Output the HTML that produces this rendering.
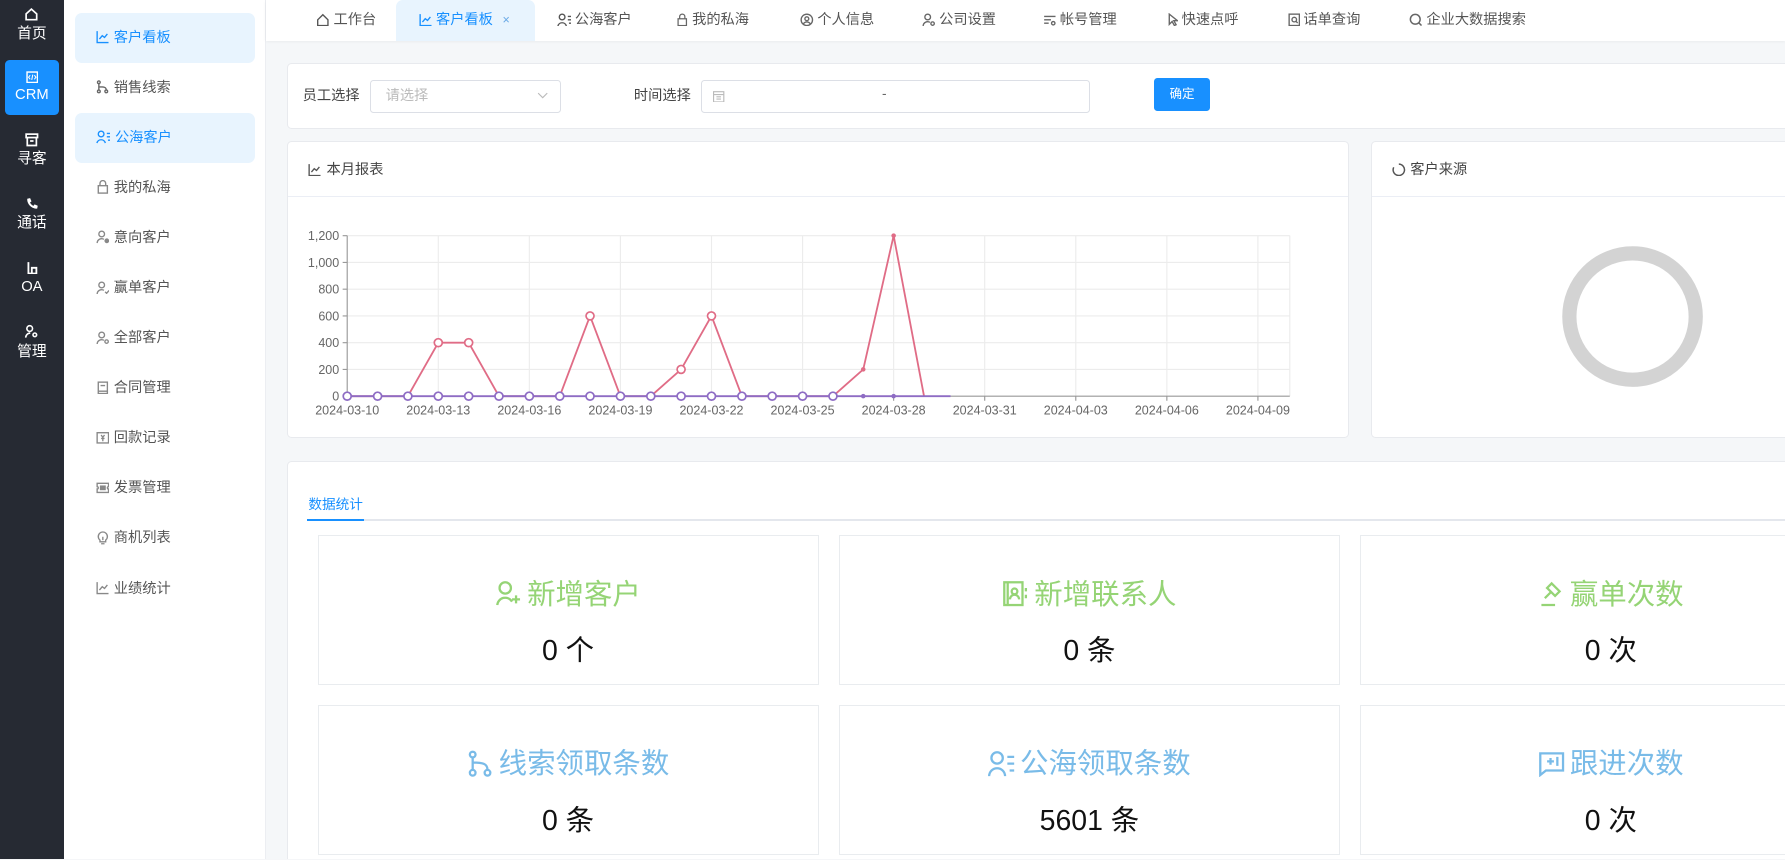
<!DOCTYPE html>
<html><head><meta charset="utf-8"><style>
*{box-sizing:border-box;margin:0;padding:0}
html,body{width:1785px;height:860px;overflow:hidden;background:#f5f6f8}
body{font-family:"Liberation Sans","Noto Sans CJK SC",sans-serif;}
#w{zoom:1.13839;width:1568px;height:755px;position:relative;overflow:hidden;background:#f5f7f9}
.abs{position:absolute}
#dark{left:0;top:0;width:56px;height:755px;background:#262a33;color:#fff}
.di{position:absolute;left:4px;width:48px;text-align:center;font-size:13px;line-height:16px}
.di svg{display:block;margin:0 auto 3px}
#sub{left:56px;top:0;width:178px;height:755px;background:#fff;border-right:1px solid #eceef2}
.si{position:absolute;left:10px;width:158px;height:44px;border-radius:6px;font-size:12.5px;color:#555;line-height:44px;padding-left:18px}
.si svg{vertical-align:-2px;margin-right:4px}
.si.on{background:#e8f4fe;color:#1890ff}
#tabs{left:234px;top:0;width:1334px;height:36px;background:#fff;box-shadow:0 1px 3px rgba(0,0,0,.06)}
.tb{position:absolute;top:0;height:36px;line-height:36px;font-size:12.5px;color:#555}
.tb svg{vertical-align:-2px;margin-right:3px}
.card{position:absolute;background:#fff;border:1px solid #e8eaee;border-radius:4px}
.box{position:absolute;background:#fff;border:1px solid #e9ecef;text-align:center}
.bt{font-size:25px;margin-top:35px;height:34px;line-height:34px}
.bt svg{vertical-align:-3px;margin-right:4px}
.bv{font-size:25px;color:#111;margin-top:12px}
.g{color:#95d475}.b{color:#79bbe8}
</style></head><body><div id="w">
<div id="dark" class="abs">
 <div class="di" style="top:6px"><svg width="13" height="13" viewBox="0 0 14 14" fill="none" stroke="#fff" stroke-width="1.6"><path d="M2 6.5L7 2l5 4.5V12H2z"/></svg>首页</div>
 <div class="di" style="top:53px;height:48px;background:#1890ff;border-radius:4px;padding-top:9px"><svg width="11" height="11" viewBox="0 0 12 12"><rect x="1" y="1" width="10" height="10" fill="none" stroke="#fff" stroke-width="1.4"/><path d="M4 4l-1.5 2L4 8M8 4l1.5 2L8 8M6.5 3.5l-1 5" stroke="#fff" fill="none"/></svg>CRM</div>
 <div class="di" style="top:117px"><svg width="12" height="12" viewBox="0 0 12 12" fill="none" stroke="#fff" stroke-width="1.5"><rect x="1" y="1" width="10" height="3"/><path d="M2 4v7h8V4M4.5 7h3"/></svg>寻客</div>
 <div class="di" style="top:173px"><svg width="12" height="12" viewBox="0 0 12 12"><path d="M2 1.5l2.5-.5 1.2 2.8-1.3 1a6 6 0 003 3l1-1.3 2.8 1.2-.5 2.5C6 10.5 1.5 6 2 1.5z" fill="#fff"/></svg>通话</div>
 <div class="di" style="top:229px"><svg width="12" height="12" viewBox="0 0 12 12" fill="none" stroke="#fff" stroke-width="1.6"><path d="M3 1v10h7V6H6v5"/></svg>OA</div>
 <div class="di" style="top:285px"><svg width="13" height="13" viewBox="0 0 13 13" fill="none" stroke="#fff" stroke-width="1.4"><circle cx="5" cy="4" r="2.5"/><path d="M1.5 12a4 4 0 014-4"/><circle cx="9.5" cy="9.5" r="1.6"/></svg>管理</div>
</div>
<div id="sub" class="abs">
 <div class="si on" style="top:11px"><svg width="12" height="12" viewBox="0 0 12 12" fill="none" stroke="#1890ff" stroke-width="1.2"><path d="M1 1v10h10M3 8l2.5-3 2 1.5L10 3.5"/></svg>客户看板</div>
 <div class="si" style="top:55px"><svg width="12" height="12" viewBox="0 0 12 12" fill="none" stroke="#666" stroke-width="1.2"><circle cx="2.5" cy="2" r="1.2"/><circle cx="2.5" cy="10" r="1.2"/><circle cx="9" cy="10" r="1.2"/><path d="M2.5 3.2v5.6M2.5 6c4 0 6.5 0 6.5 2.8"/></svg>销售线索</div>
 <div class="si on" style="top:99px"><svg width="13" height="12" viewBox="0 0 13 12" fill="none" stroke="#1890ff" stroke-width="1.2"><circle cx="4.5" cy="3.5" r="2.5"/><path d="M.8 11.5a3.8 3.8 0 017.4 0M9.5 3h3M9.5 6h3M10.5 9h2"/></svg>公海客户</div>
 <div class="si" style="top:143px"><svg width="12" height="12" viewBox="0 0 12 12" fill="none" stroke="#888" stroke-width="1.2"><rect x="2" y="5" width="8" height="6.5"/><path d="M3.5 5V3a2.5 2.5 0 015 0v2"/></svg>我的私海</div>
 <div class="si" style="top:187px"><svg width="12" height="12" viewBox="0 0 12 12" fill="none" stroke="#888" stroke-width="1.2"><circle cx="5" cy="3.5" r="2.5"/><path d="M1 11.5a4 4 0 016-3.3"/><circle cx="9.5" cy="9.5" r="1.5" fill="#888"/></svg>意向客户</div>
 <div class="si" style="top:231px"><svg width="12" height="12" viewBox="0 0 12 12" fill="none" stroke="#888" stroke-width="1.2"><circle cx="5" cy="3.5" r="2.5"/><path d="M1 11.5a4 4 0 016-3.3M8 9.5l1.3 1.3 2.2-2.5"/></svg>赢单客户</div>
 <div class="si" style="top:275px"><svg width="12" height="12" viewBox="0 0 12 12" fill="none" stroke="#888" stroke-width="1.2"><circle cx="5" cy="3.5" r="2.5"/><path d="M1 11.5a4 4 0 016-3.3"/><circle cx="9.3" cy="9.3" r="1.5"/></svg>全部客户</div>
 <div class="si" style="top:319px"><svg width="12" height="12" viewBox="0 0 12 12" fill="none" stroke="#888" stroke-width="1.2"><rect x="2" y="1" width="8" height="10"/><path d="M4 4h4M2 9h8"/></svg>合同管理</div>
 <div class="si" style="top:363px"><svg width="12" height="12" viewBox="0 0 12 12" fill="none" stroke="#888" stroke-width="1.2"><rect x="1" y="1.5" width="10" height="9"/><path d="M4.5 3.5L6 5.5l1.5-2M6 5.5V9M4.5 6.5h3"/></svg>回款记录</div>
 <div class="si" style="top:407px"><svg width="12" height="12" viewBox="0 0 12 12" fill="none" stroke="#888" stroke-width="1.2"><path d="M1 2h10v3a1 1 0 000 2v3H1V7a1 1 0 000-2z"/><rect x="4" y="4.5" width="4" height="3" fill="#888"/></svg>发票管理</div>
 <div class="si" style="top:451px"><svg width="12" height="12" viewBox="0 0 12 12" fill="none" stroke="#888" stroke-width="1.2"><path d="M3.5 8A4 4 0 118.5 8v1.5h-5zM4.5 11.2h3M6 5v3"/></svg>商机列表</div>
 <div class="si" style="top:495px"><svg width="12" height="12" viewBox="0 0 12 12" fill="none" stroke="#888" stroke-width="1.2"><path d="M1 1v10h10M3 8l2.5-3 2 1.5L10 3.5"/></svg>业绩统计</div>
</div>
<div id="tabs" class="abs">
 <div class="tb" style="left:44px"><svg width="12" height="12" viewBox="0 0 12 12" fill="none" stroke="#555" stroke-width="1.2"><path d="M1.5 6L6 1.5 10.5 6v5h-9z"/></svg>工作台</div>
 <div class="tb" style="left:114px;width:122px;background:#e8f4fe;border-radius:6px 6px 0 0;padding-left:20px;color:#1890ff"><svg width="12" height="12" viewBox="0 0 12 12" fill="none" stroke="#1890ff" stroke-width="1.2"><path d="M1 1v10h10M3 8l2.5-3 2 1.5L10 3.5"/></svg>客户看板 <span style="font-size:11px;margin-left:5px;color:#6aa9e6">×</span></div>
 <div class="tb" style="left:255px"><svg width="13" height="12" viewBox="0 0 13 12" fill="none" stroke="#555" stroke-width="1.2"><circle cx="4.5" cy="3.5" r="2.5"/><path d="M.8 11.5a3.8 3.8 0 017.4 0M9.5 3h3M9.5 6h3M10.5 9h2"/></svg>公海客户</div>
 <div class="tb" style="left:360px"><svg width="11" height="12" viewBox="0 0 12 12" fill="none" stroke="#666" stroke-width="1.2"><rect x="2" y="5" width="8" height="6.5"/><path d="M3.5 5V3a2.5 2.5 0 015 0v2"/></svg>我的私海</div>
 <div class="tb" style="left:469px"><svg width="12" height="12" viewBox="0 0 12 12" fill="none" stroke="#666" stroke-width="1.2"><circle cx="6" cy="6" r="5"/><circle cx="6" cy="5" r="1.7"/><path d="M3 9.5a3.5 3.5 0 016 0"/></svg>个人信息</div>
 <div class="tb" style="left:576px"><svg width="12" height="12" viewBox="0 0 12 12" fill="none" stroke="#666" stroke-width="1.2"><circle cx="5" cy="3.5" r="2.5"/><path d="M1 11.5a4 4 0 016-3.3"/><circle cx="9.3" cy="9.3" r="1.5"/></svg>公司设置</div>
 <div class="tb" style="left:682px"><svg width="12" height="12" viewBox="0 0 12 12" fill="none" stroke="#666" stroke-width="1.2"><path d="M1 3h10M1 6h6M1 9h4"/><circle cx="9" cy="9" r="1.5"/></svg>帐号管理</div>
 <div class="tb" style="left:791px"><svg width="10" height="12" viewBox="0 0 10 12" fill="none" stroke="#666" stroke-width="1.2"><path d="M2 1v9l2.5-2.5L6.5 11 8 10.3 6 6.8h3.2z"/></svg>快速点呼</div>
 <div class="tb" style="left:897px"><svg width="11" height="12" viewBox="0 0 11 12" fill="none" stroke="#666" stroke-width="1.2"><rect x="1" y="1" width="9" height="10"/><circle cx="5.5" cy="5.8" r="2"/><path d="M7 7.3l1.5 1.5"/></svg>话单查询</div>
 <div class="tb" style="left:1004px"><svg width="12" height="12" viewBox="0 0 12 12" fill="none" stroke="#666" stroke-width="1.3"><circle cx="5.5" cy="5.5" r="4.3"/><path d="M8.5 8.5L11 11"/></svg>企业大数据搜索</div>
</div>
<div class="card" style="left:252px;top:55px;width:1330px;height:58px">
 <div class="abs" style="left:13px;top:19px;font-size:12.5px;color:#444">员工选择</div>
 <div class="abs" style="left:72px;top:14px;width:168px;height:29px;border:1px solid #dcdfe6;border-radius:3px;font-size:12.5px;color:#bbb;line-height:27px;padding-left:13px">请选择<svg class="abs" style="right:10px;top:10px" width="10" height="6" viewBox="0 0 10 6" fill="none" stroke="#bbb"><path d="M1 1l4 4 4-4"/></svg></div>
 <div class="abs" style="left:304px;top:19px;font-size:12.5px;color:#444">时间选择</div>
 <div class="abs" style="left:363px;top:14px;width:342px;height:29px;border:1px solid #dcdfe6;border-radius:3px">
  <svg class="abs" style="left:10px;top:8px" width="10" height="11" viewBox="0 0 10 11" fill="none" stroke="#bbb"><rect x=".5" y="1.5" width="9" height="9"/><path d="M.5 4h9M3 6h4M3 8h4"/></svg>
  <span class="abs" style="left:158px;top:5px;font-size:12px;color:#666">-</span></div>
 <div class="abs" style="left:761px;top:13px;width:49px;height:29px;background:#1890ff;border-radius:3px;color:#fff;font-size:11px;text-align:center;line-height:29px">确定</div>
</div>
<div class="card" style="left:252px;top:124px;width:933px;height:261px">
 <div class="abs" style="left:18px;top:15px;font-size:12.5px;color:#444"><svg width="12" height="12" viewBox="0 0 12 12" fill="none" stroke="#555" stroke-width="1.2" style="vertical-align:-2px;margin-right:4px"><path d="M1 1v10h10M3 8l2.5-3 2 1.5L10 3.5"/></svg>本月报表</div>
 <div class="abs" style="left:0;top:47px;width:931px;border-top:1px solid #ebeef5"></div>
</div>
<svg class="abs" style="left:0;top:0" width="1568" height="400" font-family="Liberation Sans, sans-serif" font-size="11" fill="#666">
 <g stroke="#ececec" stroke-width="1">
  <path d="M305 207H1133M305 230.5H1133M305 254H1133M305 277.5H1133M305 301H1133M305 324.5H1133"/>
  <path d="M385 207V348M465 207V348M545 207V348M625 207V348M705 207V348M785 207V348M865 207V348M945 207V348M1025 207V348M1105 207V348M1133 207V348"/>
 </g>
 <path d="M305 207V348H1133" stroke="#999" fill="none"/>
 <g stroke="#999"><path d="M301 207h4M301 230.5h4M301 254h4M301 277.5h4M301 301h4M301 324.5h4M301 348h4M305 348v4M385 348v4M465 348v4M545 348v4M625 348v4M705 348v4M785 348v4M865 348v4M945 348v4M1025 348v4M1105 348v4"/></g>
 <g text-anchor="end"><text x="298" y="211">1,200</text><text x="298" y="234.5">1,000</text><text x="298" y="258">800</text><text x="298" y="281.5">600</text><text x="298" y="305">400</text><text x="298" y="328.5">200</text><text x="298" y="352">0</text></g>
 <g text-anchor="middle"><text x="305" y="364">2024-03-10</text><text x="385" y="364">2024-03-13</text><text x="465" y="364">2024-03-16</text><text x="545" y="364">2024-03-19</text><text x="625" y="364">2024-03-22</text><text x="705" y="364">2024-03-25</text><text x="785" y="364">2024-03-28</text><text x="865" y="364">2024-03-31</text><text x="945" y="364">2024-04-03</text><text x="1025" y="364">2024-04-06</text><text x="1105" y="364">2024-04-09</text></g>
 <polyline fill="none" stroke="#e06c86" stroke-width="1.6" points="305,348 331.7,348 358.3,348 385,301 411.7,301 438.3,348 465,348 491.7,348 518.3,277.5 545,348 571.7,348 598.3,324.5 625,277.5 651.7,348 678.3,348 705,348 731.7,348 758.3,324.5 785,207 811.7,348"/>
 <line x1="305" y1="348" x2="835" y2="348" stroke="#8e6cc4" stroke-width="1.6"/>
 <g fill="#fff" stroke="#e06c86" stroke-width="1.5">
  <circle cx="385" cy="301" r="3.5"/><circle cx="411.7" cy="301" r="3.5"/><circle cx="518.3" cy="277.5" r="3.5"/><circle cx="598.3" cy="324.5" r="3.5"/><circle cx="625" cy="277.5" r="3.5"/>
 </g>
 <g fill="#e06c86"><circle cx="758.3" cy="324.5" r="2"/><circle cx="785" cy="207" r="2"/></g>
 <g fill="#fff" stroke="#8e6cc4" stroke-width="1.5">
  <circle cx="305" cy="348" r="3.5"/><circle cx="331.7" cy="348" r="3.5"/><circle cx="358.3" cy="348" r="3.5"/><circle cx="385" cy="348" r="3.5"/><circle cx="411.7" cy="348" r="3.5"/><circle cx="438.3" cy="348" r="3.5"/><circle cx="465" cy="348" r="3.5"/><circle cx="491.7" cy="348" r="3.5"/><circle cx="518.3" cy="348" r="3.5"/><circle cx="545" cy="348" r="3.5"/><circle cx="571.7" cy="348" r="3.5"/><circle cx="598.3" cy="348" r="3.5"/><circle cx="625" cy="348" r="3.5"/><circle cx="651.7" cy="348" r="3.5"/><circle cx="678.3" cy="348" r="3.5"/><circle cx="705" cy="348" r="3.5"/><circle cx="731.7" cy="348" r="3.5"/>
 </g>
 <g fill="#8e6cc4"><circle cx="758.3" cy="348" r="2"/><circle cx="785" cy="348" r="2"/></g>
</svg>
<div class="card" style="left:1204px;top:124px;width:380px;height:261px">
 <div class="abs" style="left:18px;top:15px;font-size:12.5px;color:#444"><svg width="12" height="12" viewBox="0 0 12 12" fill="none" stroke="#555" stroke-width="1.3" style="vertical-align:-2px;margin-right:4px"><path d="M6 1a5 5 0 11-4.5 2.8"/></svg>客户来源</div>
 <div class="abs" style="left:0;top:47px;width:380px;border-top:1px solid #ebeef5"></div>
 <svg class="abs" style="left:160px;top:84px" width="140" height="140"><circle cx="69" cy="69" r="55.5" fill="none" stroke="#d3d3d3" stroke-width="12.5"/></svg>
</div>
<div class="card" style="left:252px;top:405px;width:1330px;height:360px">
 <div class="abs" style="left:18px;top:27px;font-size:12px;color:#1890ff">数据统计</div>
 <div class="abs" style="left:17px;top:50px;width:1313px;border-top:2px solid #e4e7ed"></div>
 <div class="abs" style="left:17px;top:50px;width:50px;border-top:2px solid #1890ff"></div>
</div>
<div class="box" style="left:279px;top:470px;width:440px;height:132px"><div class="bt g"><svg width="24" height="24" viewBox="0 0 24 24" fill="none" stroke="#95d475" stroke-width="2"><circle cx="9" cy="7" r="5"/><path d="M2 22a7 7 0 0113-3M15 17h7M18.5 13.5v7"/></svg>新增客户</div><div class="bv">0 个</div></div>
<div class="box" style="left:737px;top:470px;width:440px;height:132px"><div class="bt g"><svg width="24" height="24" viewBox="0 0 24 24" fill="none" stroke="#95d475" stroke-width="2"><rect x="2" y="2" width="16" height="20"/><circle cx="11" cy="10" r="2.5"/><path d="M7 17a4 4 0 018 0M21 7v3M21 13v3M5 2v20"/></svg>新增联系人</div><div class="bv">0 条</div></div>
<div class="box" style="left:1195px;top:470px;width:440px;height:132px"><div class="bt g"><svg width="24" height="24" viewBox="0 0 24 24" fill="none" stroke="#95d475" stroke-width="2"><path d="M12 3l7 7-4 4-7-7zM6 16l6-6M3 22h12"/></svg>赢单次数</div><div class="bv">0 次</div></div>
<div class="box" style="left:279px;top:619px;width:440px;height:132px"><div class="bt b"><svg width="24" height="24" viewBox="0 0 24 24" fill="none" stroke="#79bbe8" stroke-width="2"><circle cx="5" cy="4" r="2.5"/><circle cx="5" cy="20" r="2.5"/><circle cx="18" cy="20" r="2.5"/><path d="M5 6.5v11M5 11c9 0 13 1 13 6.5"/></svg>线索领取条数</div><div class="bv">0 条</div></div>
<div class="box" style="left:737px;top:619px;width:440px;height:132px"><div class="bt b"><svg width="24" height="24" viewBox="0 0 24 24" fill="none" stroke="#79bbe8" stroke-width="2"><circle cx="8" cy="7" r="5"/><path d="M1 23a7 7 0 0114 0M17 6h6M17 12h6M19 18h4"/></svg>公海领取条数</div><div class="bv">5601 条</div></div>
<div class="box" style="left:1195px;top:619px;width:440px;height:132px"><div class="bt b"><svg width="24" height="24" viewBox="0 0 24 24" fill="none" stroke="#79bbe8" stroke-width="2"><path d="M2 3h20v15H7l-5 4zM8 10h6M11 7v6M17 6v8"/></svg>跟进次数</div><div class="bv">0 次</div></div>
</div></body></html>
